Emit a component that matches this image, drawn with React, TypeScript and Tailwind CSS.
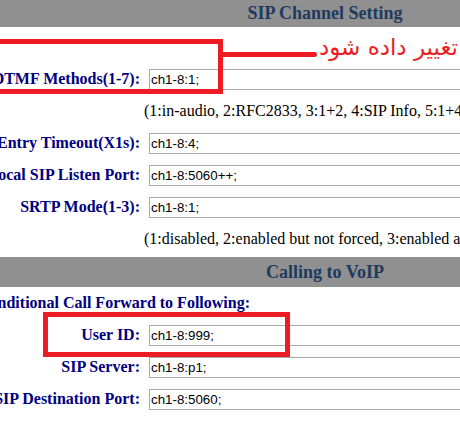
import React from 'react';

interface FieldProps {
  label: string;
  value: string;
}

const Field: React.FC<FieldProps> = ({ label, value }) => (
  <div className="flex h-8 items-center">
    <div className="w-[180px] shrink-0 whitespace-nowrap text-right text-[16px] font-bold text-[#000080]">{label}</div>
    <input
      readOnly
      defaultValue={value}
      className="ml-[9px] h-[21px] w-[320px] shrink-0 border border-[#a9a9a9] bg-white pl-[1px] font-['Liberation_Sans',Arial,sans-serif] text-[13.33px] text-black outline-none"
    />
  </div>
);

const Note: React.FC<{ text: string }> = ({ text }) => (
  <div className="flex h-8 items-center whitespace-nowrap pl-[184px] text-[16px] text-black">{text}</div>
);

const SectionHeader: React.FC<{ title: string; tall?: boolean }> = ({ title, tall }) => (
  <div
    className={`flex items-center justify-center bg-[#909090] text-[18px] font-bold text-[#1e3a5f] ${tall ? 'h-[30px]' : 'h-[27px]'}`}
  >
    {title}
  </div>
);

export default function App() {
  return (
    <div className="relative h-[445px] w-[460px] overflow-hidden bg-white font-['Liberation_Serif','Times_New_Roman',serif]">
      <div className="-ml-[40px] w-[730px]">
        <SectionHeader title="SIP Channel Setting" />
        <div className="h-[36px]" />
        <Field label="DTMF Methods(1-7):" value="ch1-8:1;" />
        <Note text="(1:in-audio, 2:RFC2833, 3:1+2, 4:SIP Info, 5:1+4, 6:2+4, 7:1+2+4)" />
        <Field label="Entry Timeout(X1s):" value="ch1-8:4;" />
        <Field label="Local SIP Listen Port:" value="ch1-8:5060++;" />
        <Field label="SRTP Mode(1-3):" value="ch1-8:1;" />
        <Note text="(1:disabled, 2:enabled but not forced, 3:enabled and forced)" />
        <div className="mt-[2px]">
          <SectionHeader title="Calling to VoIP" tall />
        </div>
        <div className="flex h-8 items-center whitespace-nowrap pl-[2px] text-[16px] font-bold text-[#000080]">
          Unconditional Call Forward to Following:
        </div>
        <Field label="User ID:" value="ch1-8:999;" />
        <Field label="SIP Server:" value="ch1-8:p1;" />
        <Field label="SIP Destination Port:" value="ch1-8:5060;" />
      </div>

      {/* annotation overlay */}
      <div className="absolute left-[-10px] top-[39px] h-[55px] w-[233px] border-[5px] border-[#ed1c24]" />
      <div className="absolute left-[223px] top-[52px] h-[5px] w-[94px] rounded-r-full bg-[#ed1c24]" />
      <div
        dir="rtl"
        className="absolute right-[2px] top-[31px] whitespace-nowrap font-['DejaVu_Sans',sans-serif] text-[23px] leading-[32px] tracking-[-0.5px] text-[#ed1c24]"
      >
        تغییر داده شود
      </div>
      <div className="absolute left-[43px] top-[312px] h-[45px] w-[247px] border-[5px] border-[#ed1c24]" />
    </div>
  );
}
